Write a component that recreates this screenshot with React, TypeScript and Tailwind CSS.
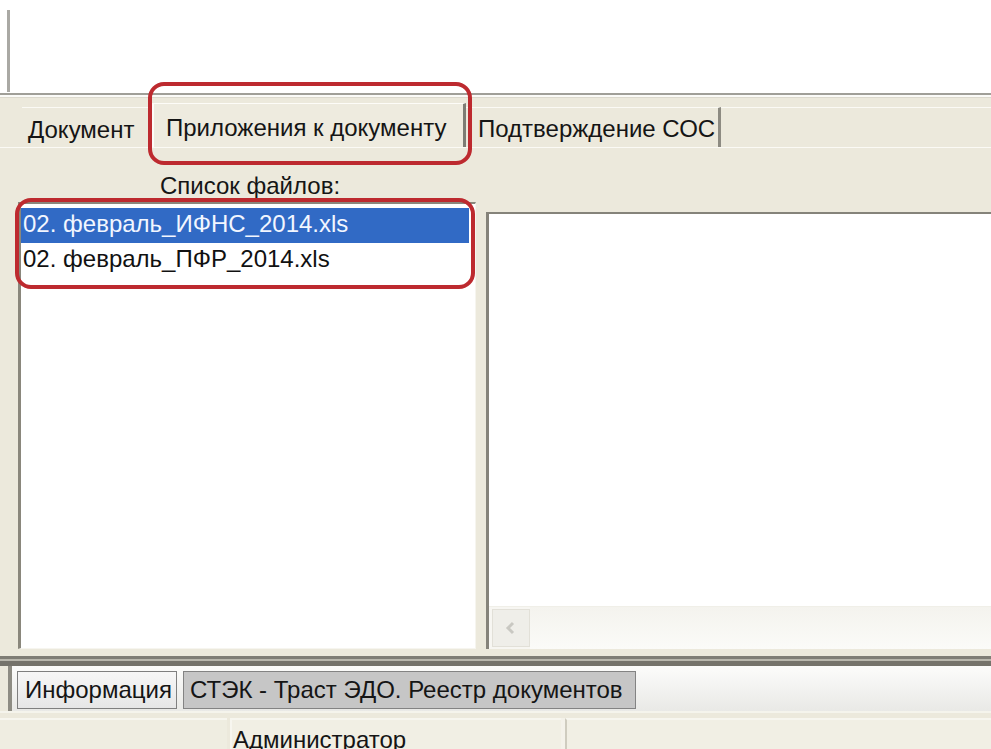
import React from "react";

const font = "font-['Liberation_Sans',Arial,sans-serif]";

function TopTabs() {
  return (
    <div className="h-[50px] pt-[9px] flex items-stretch border-b border-[#fbfaf5]">
      <div className="w-[22px] shrink-0" />
      <div className="w-[130px] shrink-0 border-t border-[#fbfaf5] flex items-center pl-[6px] pt-[5px]">
        <span>Документ</span>
      </div>
      <div className="w-[314px] shrink-0 -mt-[4px] border-l-2 border-t border-[#fdfcf8] border-r-[3px] border-r-[#7e7c74] bg-[#eeebdf] flex items-center pl-[12px] pt-[4px]">
        <span>Приложения к документу</span>
      </div>
      <div className="w-[255px] shrink-0 border-t border-[#fbfaf5] border-r-[3px] border-r-[#8d8b82] flex items-center pl-[12px] pt-[3px]">
        <span>Подтверждение СОС</span>
      </div>
      <div className="flex-1 border-t border-[#fbfaf5]" />
    </div>
  );
}

function FileList() {
  const files = ["02. февраль_ИФНС_2014.xls", "02. февраль_ПФР_2014.xls"];
  return (
    <div className="w-[458px] ml-[18px] shrink-0 bg-white border-l-[3px] border-t-2 border-[#8a877c] border-r border-b border-r-[#f6f5ef] border-b-[#f6f5ef] pt-[4px]">
      {files.map((f, i) => (
        <div
          key={f}
          className={
            "h-[35px] pl-[2px] pt-[2px] leading-[28px] whitespace-nowrap " +
            (i === 0 ? "bg-[#316ac5] text-[#f2f6ff] mr-[6px]" : "text-[#111]")
          }
        >
          {f}
        </div>
      ))}
    </div>
  );
}

function PreviewPane() {
  return (
    <div className="flex-1 mt-[10px] flex flex-col bg-white border-l-[3px] border-t-2 border-[#85837a]">
      <div className="flex-1" />
      <div className="h-[43px] flex border-t border-[#f0efe8] bg-[#f7f6f2]">
        <div className="w-[38px] ml-[3px] my-[2px] border border-[#e2e0d8] bg-[#efeee9] flex items-center justify-center">
          <svg width="14" height="14" viewBox="0 0 14 14">
            <path d="M9 2 L4 7 L9 12" fill="none" stroke="#c9c8c2" strokeWidth="3" />
          </svg>
        </div>
        <div className="flex-1 bg-gradient-to-b from-[#f4f3ee] to-[#fbfbf8]" />
      </div>
    </div>
  );
}

function BottomTabs() {
  return (
    <div className="h-[50px] ml-[8px] flex items-stretch border-l-[4px] border-[#8e8c83] bg-gradient-to-b from-[#fcfcfb] to-[#e9e9e6]">
      <div className="flex items-stretch pt-[5px] pb-[2px] pl-[5px]">
        <div className="w-[160px] flex items-center pl-[7px] border border-[#7f7f7f] bg-gradient-to-b from-[#f7f7f7] to-[#e6e6e6]">
          Информация
        </div>
        <div className="w-[453px] ml-[6px] flex items-center pl-[6px] border border-[#838383] bg-[#c6c6c6] whitespace-nowrap">
          СТЭК - Траст ЭДО. Реестр документов
        </div>
      </div>
      <div className="flex-1" />
    </div>
  );
}

function StatusBar() {
  return (
    <div className="flex-1 flex pt-[5px] border-t-2 border-[#f5f4ec]">
      <div className="w-[227px] shrink-0 border-t-2 border-[#f7f6ef] bg-[#efede1]" />
      <div className="w-[331px] shrink-0 ml-[3px] border-t-2 border-l-2 border-[#f7f6ef] bg-[#f1efe4] pl-[1px] leading-[28px] pt-[6px] overflow-hidden">
        Администратор
      </div>
      <div className="w-[4px] shrink-0 bg-[#f4f2ea]" />
      <div className="flex-1 border-t-2 border-l-2 border-[#f7f6ef] border-l-[#cfccbf] bg-[#f1efe4]" />
    </div>
  );
}

export default function App() {
  return (
    <div className={"relative w-[991px] h-[749px] overflow-hidden bg-[#ece9dc] text-[24px] text-[#151515] flex flex-col " + font}>
      {/* white area above the document tabs */}
      <div className="h-[93px] shrink-0 bg-white pl-[7px] pt-[10px]">
        <div className="h-[82px] border-l-[3px] border-[#aaa9a4]" />
      </div>
      {/* splitter line */}
      <div className="h-[2px] shrink-0 bg-[#a09f98]" />
      <div className="h-[2px] shrink-0 bg-[#fbfbf8]" />
      <div className="h-[1px] shrink-0 bg-[#dcd9cd]" />

      <TopTabs />

      {/* attachments page */}
      <div className="h-[508px] shrink-0 flex flex-col pb-[7px]">
        <div className="pl-[160px] pt-[24px] leading-[28px] h-[54px] shrink-0">Список файлов:</div>
        <div className="flex-1 flex gap-[10px]">
          <FileList />
          <PreviewPane />
        </div>
      </div>

      {/* splitter above the window tabs */}
      <div className="h-[3px] shrink-0 bg-[#7f7d75]" />
      <div className="h-[2px] shrink-0 bg-[#b9b7ad]" />
      <div className="h-[5px] shrink-0 bg-[#75736b]" />

      <BottomTabs />
      <StatusBar />

      {/* red highlight frames */}
      <div className="absolute left-[148px] top-[82px] w-[324px] h-[83px] border-[4px] border-[#bd2a2f] rounded-[16px]" />
      <div className="absolute left-[15px] top-[198px] w-[460px] h-[91px] border-[4px] border-[#bd2a2f] rounded-[16px]" />
    </div>
  );
}
